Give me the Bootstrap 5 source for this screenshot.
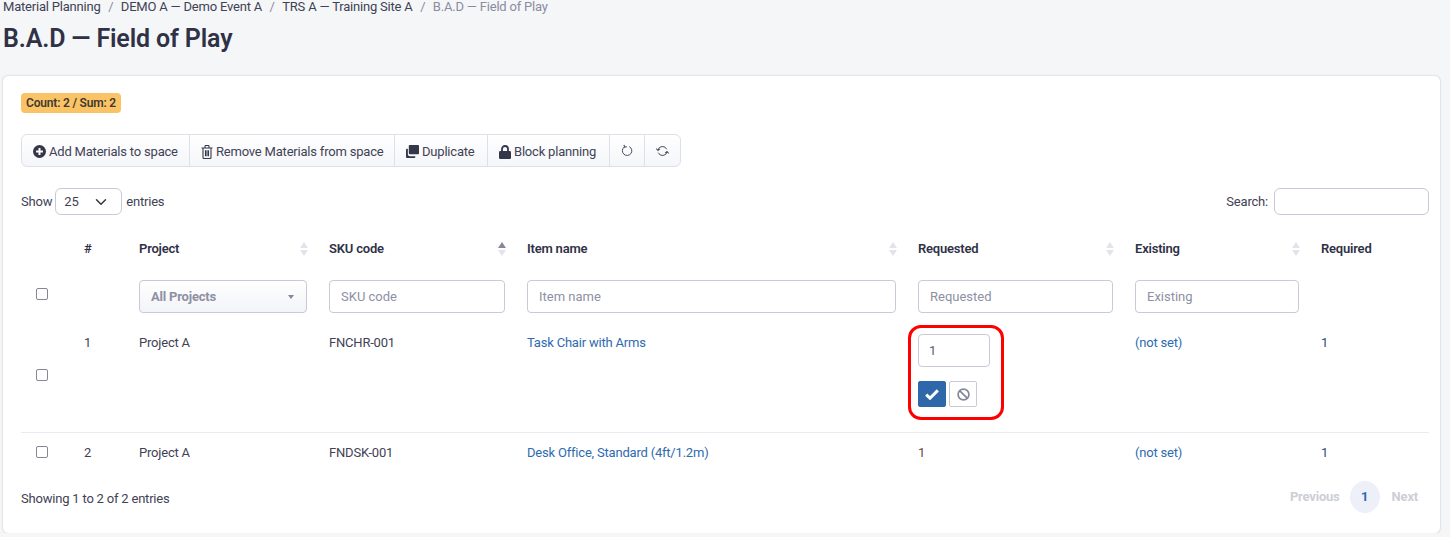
<!DOCTYPE html>
<html lang="en">
<head>
    <meta charset="UTF-8">
    <meta name="viewport" content="width=device-width, initial-scale=1">
    <title>B.A.D — Field of Play</title>
    <link href="https://cdn.jsdelivr.net/npm/bootstrap@5.3.2/dist/css/bootstrap.min.css" rel="stylesheet">
    <style>
        body {
          background: #f5f6f8;
          color: #3f4254;
          font-family: Roboto, "Liberation Sans", sans-serif;
          font-size: 13px;
          letter-spacing: -.2px;
          overflow: hidden;
        }
        .page-wrap { padding: 0 10px 0 3px; }
        .crumbs { margin: -3px 0 0; font-size: 13px; line-height: 19px; letter-spacing: -.2px; --bs-breadcrumb-divider-color: #8a8d9f; --bs-breadcrumb-item-active-color: #8a8d9f; --bs-breadcrumb-margin-bottom: 0; --bs-breadcrumb-item-padding-x: 7.5px; }
        .crumbs a { color: #3f4254; text-decoration: none; }
        .page-title { margin: 6px 0 20px; font-size: 25px; line-height: 34px; font-weight: 600; letter-spacing: -.15px; color: #2f3246; }
        .main-panel { height: 457px; padding: 17px 11px 0 18px; border: 0; border-radius: 5px; box-shadow: 0 0 2px rgba(60, 65, 90, .35); }
        .count-tag { width: 100px; height: 20px; margin-bottom: 21px; padding: 0; line-height: 20px; font-size: 12px; font-weight: 600; letter-spacing: -.2px; color: #3f3a30; background: #fac366; border-radius: 4px; }
        .tool-group { align-self: flex-start; height: 33px; margin-bottom: 21px; }
        .tool-group .btn { display: flex; align-items: center; gap: 3px; flex: none; padding: 2px 11px 0; font-size: 13px; letter-spacing: -.2px; color: #3f4254; background: linear-gradient(#fff, #f5f6fa); border: 1px solid #dde0e8; white-space: nowrap; }
        .tool-group svg { flex: none; }
        .tool-group .add-btn { width: 169px; }
        .tool-group .remove-btn { width: 206px; }
        .tool-group .dup-btn { width: 94px; }
        .tool-group .lock-btn { width: 123px; }
        .tool-group .icon-btn { width: 36px; padding: 0; justify-content: center; }
        .tool-group .icon-btn:last-child { width: 37px; }
        .len-select { width: 67px; height: 27px; margin-left: -1px; padding: 0 8px; font-size: 13px; color: #3f4254; border-color: #c8cad8; background-position: right 12px center; }
        .search-box { width: 155px; height: 27px; margin-left: 2px; padding: 0 8px; border-color: #c8cad8; font-size: 13px; }
        .data-table { table-layout: fixed; width: 1408px; margin: 0; font-size: 13px; color: #3f4254; --bs-table-color: #3f4254; }
        .data-table th, .data-table td { padding: 0 10.5px; border: 0; box-shadow: none; vertical-align: top; }
        .data-table thead tr:first-child th { height: 53px; padding-top: 25px; line-height: 18px; font-weight: 600; color: #2f3246; }
        .data-table thead tr:nth-child(2) th { height: 56px; padding-top: 12px; padding-right: 11.5px; }
        .data-table .check-cell { padding-left: 15px; }
        .data-table thead tr:nth-child(2) .check-cell { padding-top: 20px; }
        .data-table input[type=checkbox] { display: block; width: 12px; height: 12px; margin: 0; border-color: #858796; border-radius: 2px; }
        .data-table tbody tr:first-child td { height: 108px; padding-top: 10px; line-height: 18px; border-bottom: 1px solid #e9ebf0; }
        .data-table tbody tr:last-child td { height: 40px; padding-top: 11px; line-height: 18px; }
        .data-table tbody tr:first-child .check-cell { padding-top: 45px; }
        .data-table tbody tr:last-child .check-cell { padding-top: 13px; }
        .sort-wrap { display: flex; justify-content: space-between; align-items: center; }
        .sort-marks { display: flex; flex-direction: column; gap: 2px; flex: none; }
        .sort-marks i { display: block; border-left: 4px solid transparent; border-right: 4px solid transparent; }
        .sort-marks .up { border-bottom: 6px solid #e3e4ea; }
        .sort-marks .down { border-top: 6px solid #e3e4ea; }
        .sort-marks .on { border-bottom-color: #85879a; }
        .filter-input { height: 33px; padding: 0 11px; font-size: 13px; font-weight: 400; border-color: #c8cad8; border-radius: 4px; }
        .filter-input::placeholder { color: #8e90a3; }
        .project-select { display: flex; align-items: center; justify-content: space-between; height: 33px; padding: 0 12px 0 11px; font-weight: 700; color: #8e90a3; background: linear-gradient(#fff, #f3f4f9); border: 1px solid #c8cad8; border-radius: 4px; }
        .caret-down { border-left: 3.5px solid transparent; border-right: 3.5px solid transparent; border-top: 4px solid #85879a; }
        .data-table a { color: #2e6bb0; text-decoration: none; }
        .data-table .req-val { color: #6b4450; }
        .data-table .req-link { color: #2f4a78; }
        .edit-box { position: relative; width: 72px; }
        .edit-box .form-control { height: 33px; margin-bottom: 14px; padding: 0 10px; font-size: 13px; color: #585a6c; border-color: #c8cad8; border-radius: 4px; }
        .edit-btn { display: inline-flex; align-items: center; justify-content: center; width: 28px; height: 26px; padding: 0; border-radius: 2px; }
        .edit-ok { background: #2f68aa; border: 1px solid #2f68aa; }
        .edit-no { background: #fff; border: 1px solid #c8cad8; margin-left: 3px; }
        .red-outline { position: absolute; top: -9px; left: -10px; width: 96px; height: 95px; border: 3px solid #f00; border-radius: 13px; pointer-events: none; }
        .list-foot { margin-top: 13px; padding-right: 11px; }
        .pager-text { font-weight: 700; color: #cdced6; }
        .pager-prev { margin-right: 2px; }
        .pager-num { display: flex; align-items: center; justify-content: center; width: 30px; height: 32px; font-weight: 700; color: #2e6bb0; background: #edf0f8; border-radius: 50%; }
        .pager-wrap { margin-top: -4px; }
    </style>
</head>
<body>
<div class="page-wrap">
    <nav aria-label="breadcrumb">
        <ol class="breadcrumb crumbs">
            <li class="breadcrumb-item"><a href="#">Material Planning</a></li>
            <li class="breadcrumb-item"><a href="#">DEMO A — Demo Event A</a></li>
            <li class="breadcrumb-item"><a href="#">TRS A — Training Site A</a></li>
            <li class="breadcrumb-item active" aria-current="page">B.A.D — Field of Play</li>
        </ol>
    </nav>
    <h1 class="page-title">B.A.D — Field of Play</h1>

    <div class="card main-panel">
        <div class="badge count-tag">Count: 2 / Sum: 2</div>

        <!-- Toolbar -->
        <div class="btn-group tool-group" role="group">
            <button type="button" class="btn add-btn">
                <svg width="13" height="13" viewBox="0 0 16 16"><circle cx="8" cy="8" r="8" fill="#34374a"/><path d="M8 3.8v8.4M3.8 8h8.4" stroke="#fff" stroke-width="2.4"/></svg>
                Add Materials to space
            </button>
            <button type="button" class="btn remove-btn">
                <svg width="12" height="14" viewBox="0 0 12 14" fill="none" stroke="#34374a" stroke-width="1.1"><path d="M.5 3h11M2 3v9.5c0 .6.4 1 1 1h6c.6 0 1-.4 1-1V3M4 3V1.2c0-.4.3-.7.7-.7h2.6c.4 0 .7.3.7.7V3M4.5 5.2v6M6 5.2v6M7.5 5.2v6"/></svg>
                Remove Materials from space
            </button>
            <button type="button" class="btn dup-btn">
                <svg width="13" height="13" viewBox="0 0 14 14" fill="#34374a"><path d="M4 0h9c.6 0 1 .4 1 1v8c0 .6-.4 1-1 1H4c-.6 0-1-.4-1-1V1c0-.6.4-1 1-1z"/><path d="M0 5c0-.6.4-1 1-1h1v6c0 1 .8 2 2 2h6v1c0 .6-.4 1-1 1H1c-.6 0-1-.4-1-1z"/></svg>
                Duplicate
            </button>
            <button type="button" class="btn lock-btn">
                <svg width="12" height="14" viewBox="0 0 12 14"><path d="M3 6V4a3 3 0 0 1 6 0v2" fill="none" stroke="#34374a" stroke-width="1.8"/><rect y="6" width="12" height="8" rx="1.2" fill="#34374a"/></svg>
                Block planning
            </button>
            <button type="button" class="btn icon-btn" aria-label="Reset">
                <svg width="12" height="13" viewBox="0 0 12 13" fill="none" stroke="#4a4c5e" stroke-width="1"><path d="M3.4 2.9a4.7 4.7 0 1 0 4.9-.3"/><path d="M3 .8l.6 2.3 2.3-.3" stroke-width="1.1"/></svg>
            </button>
            <button type="button" class="btn icon-btn" aria-label="Refresh">
                <svg width="13" height="12" viewBox="0 0 13 12" fill="none" stroke="#4a4c5e" stroke-width="1"><path d="M2 5a4.6 4.6 0 0 1 8.7-.7M11 7a4.6 4.6 0 0 1-8.7.7"/><path d="M.3 3.6L2 5.5l1.8-1.7M12.7 8.4L11 6.5 9.2 8.2" stroke-width="1.1"/></svg>
            </button>
        </div>

        <!-- Length and search -->
        <div class="d-flex justify-content-between align-items-center">
            <label class="d-flex align-items-center gap-1">Show
                <select class="form-select len-select"><option>25</option></select>
                entries</label>
            <label class="d-flex align-items-center gap-1">Search:
                <input type="search" class="form-control search-box"></label>
        </div>

        <table class="table data-table">
            <colgroup>
                <col style="width:52.5px"><col style="width:55px"><col style="width:190px"><col style="width:198px"><col style="width:391px"><col style="width:217px"><col style="width:186px"><col style="width:118.5px">
            </colgroup>
            <thead>
                <tr>
                    <th></th>
                    <th>#</th>
                    <th><div class="sort-wrap">Project <span class="sort-marks"><i class="up"></i><i class="down"></i></span></div></th>
                    <th><div class="sort-wrap">SKU code <span class="sort-marks"><i class="up on"></i><i class="down"></i></span></div></th>
                    <th><div class="sort-wrap">Item name <span class="sort-marks"><i class="up"></i><i class="down"></i></span></div></th>
                    <th><div class="sort-wrap">Requested <span class="sort-marks"><i class="up"></i><i class="down"></i></span></div></th>
                    <th><div class="sort-wrap">Existing <span class="sort-marks"><i class="up"></i><i class="down"></i></span></div></th>
                    <th>Required</th>
                </tr>
                <tr>
                    <th class="check-cell"><input class="form-check-input" type="checkbox" aria-label="Select all"></th>
                    <th></th>
                    <th><div class="project-select">All Projects <span class="caret-down"></span></div></th>
                    <th><input class="form-control filter-input" placeholder="SKU code"></th>
                    <th><input class="form-control filter-input" placeholder="Item name"></th>
                    <th><input class="form-control filter-input" placeholder="Requested"></th>
                    <th><input class="form-control filter-input" placeholder="Existing"></th>
                    <th></th>
                </tr>
            </thead>
            <tbody>
                <tr>
                    <td class="check-cell"><input class="form-check-input" type="checkbox" aria-label="Select row 1"></td>
                    <td>1</td>
                    <td>Project A</td>
                    <td>FNCHR-001</td>
                    <td><a href="#">Task Chair with Arms</a></td>
                    <td>
                        <div class="edit-box">
                            <input class="form-control" value="1">
                            <div class="d-flex">
                                <button type="button" class="btn edit-btn edit-ok" aria-label="Save">
                                    <svg width="14" height="11" viewBox="0 0 14 11" fill="none" stroke="#fff" stroke-width="3"><path d="M1.2 5.6l3.8 3.6L12.8 1.4"/></svg>
                                </button>
                                <button type="button" class="btn edit-btn edit-no" aria-label="Cancel">
                                    <svg width="13" height="13" viewBox="0 0 13 13" fill="none" stroke="#85879a" stroke-width="1.7"><circle cx="6.5" cy="6.5" r="5.4"/><path d="M2.8 2.8l7.4 7.4"/></svg>
                                </button>
                            </div>
                            <span class="red-outline"></span>
                        </div>
                    </td>
                    <td><a href="#">(not set)</a></td>
                    <td><a href="#" class="req-link">1</a></td>
                </tr>
                <tr>
                    <td class="check-cell"><input class="form-check-input" type="checkbox" aria-label="Select row 2"></td>
                    <td>2</td>
                    <td>Project A</td>
                    <td>FNDSK-001</td>
                    <td><a href="#">Desk Office, Standard (4ft/1.2m)</a></td>
                    <td><a href="#" class="req-val">1</a></td>
                    <td><a href="#">(not set)</a></td>
                    <td><a href="#" class="req-link">1</a></td>
                </tr>
            </tbody>
        </table>

        <div class="d-flex justify-content-between align-items-center list-foot">
            <div>Showing 1 to 2 of 2 entries</div>
            <div class="d-flex align-items-center gap-2 pager-wrap">
                <span class="pager-text pager-prev">Previous</span>
                <span class="pager-num">1</span>
                <span class="pager-text ms-1">Next</span>
            </div>
        </div>
    </div>
</div>
<script src="https://cdn.jsdelivr.net/npm/bootstrap@5.3.2/dist/js/bootstrap.bundle.min.js"></script>
</body>
</html>
